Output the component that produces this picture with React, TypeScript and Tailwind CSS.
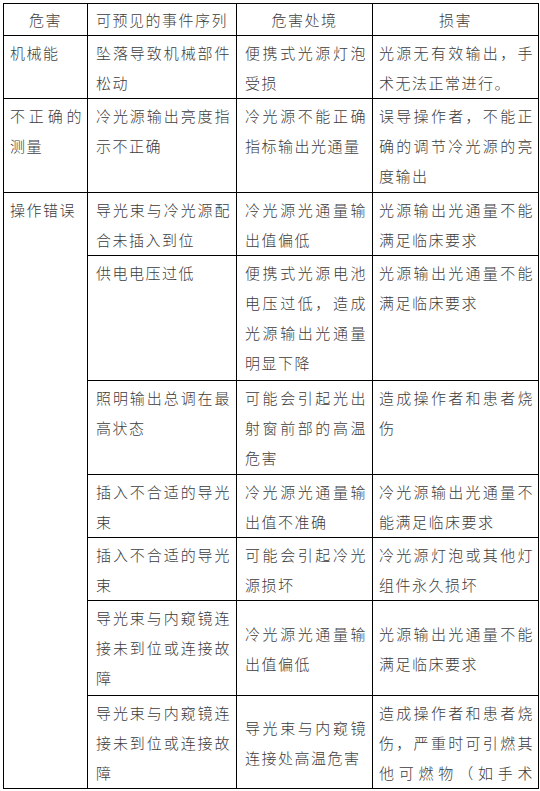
import React from "react";

type Cell = {
  text: string;
  mid?: boolean;
  rowSpan?: number;
  last?: boolean;
};

type Row = { h: number; cells: Cell[] };

const pad = ["pl-[6px] pr-[4px]", "pl-[8px] pr-[5px]", "pl-[8px] pr-[5px]", "pl-[6px] pr-[4px]"];

const rows: Row[] = [
  {
    h: 63,
    cells: [
      { text: "机械能" },
      { text: "坠落导致机械部件松动" },
      { text: "便携式光源灯泡受损" },
      { text: "光源无有效输出，手术无法正常进行。" },
    ],
  },
  {
    h: 94,
    cells: [
      { text: "不正确的测量" },
      { text: "冷光源输出亮度指示不正确" },
      { text: "冷光源不能正确指标输出光通量" },
      { text: "误导操作者，不能正确的调节冷光源的亮度输出" },
    ],
  },
  {
    h: 63,
    cells: [
      { text: "操作错误", rowSpan: 7 },
      { text: "导光束与冷光源配合未插入到位" },
      { text: "冷光源光通量输出值偏低" },
      { text: "光源输出光通量不能满足临床要求" },
    ],
  },
  {
    h: 125,
    cells: [
      { text: "供电电压过低" },
      { text: "便携式光源电池电压过低，造成光源输出光通量明显下降" },
      { text: "光源输出光通量不能满足临床要求" },
    ],
  },
  {
    h: 94,
    cells: [
      { text: "照明输出总调在最高状态" },
      { text: "可能会引起光出射窗前部的高温危害" },
      { text: "造成操作者和患者烧伤" },
    ],
  },
  {
    h: 63,
    cells: [
      { text: "插入不合适的导光束" },
      { text: "冷光源光通量输出值不准确" },
      { text: "冷光源输出光通量不能满足临床要求" },
    ],
  },
  {
    h: 63,
    cells: [
      { text: "插入不合适的导光束" },
      { text: "可能会引起冷光源损坏" },
      { text: "冷光源灯泡或其他灯组件永久损坏" },
    ],
  },
  {
    h: 95,
    cells: [
      { text: "导光束与内窥镜连接未到位或连接故障" },
      { text: "冷光源光通量输出值偏低", mid: true },
      { text: "光源输出光通量不能满足临床要求", mid: true },
    ],
  },
  {
    h: 93,
    cells: [
      { text: "导光束与内窥镜连接未到位或连接故障" },
      { text: "导光束与内窥镜连接处高温危害", mid: true },
      // the table runs on past the page edge, so the last line is stretched like a full one
      { text: "造成操作者和患者烧伤，严重时可引燃其他可燃物（如手术", last: true },
    ],
  },
];

export default function App() {
  return (
    <div className="min-h-screen bg-white pl-[3px] pt-[3px]">
      <table
        className="w-[535px] table-fixed border-collapse border border-black text-[15px] leading-[30px] tracking-[1.5px] text-[#3c3c3c] font-light"
        style={{ fontFamily: '"Noto Sans CJK SC", "Noto Sans", sans-serif' }}
      >
        <colgroup>
          <col className="w-[84px]" />
          <col className="w-[149px]" />
          <col className="w-[136px]" />
          <col className="w-[166px]" />
        </colgroup>
        <thead>
          <tr className="h-[31px]">
            {["危害", "可预见的事件序列", "危害处境", "损害"].map((t) => (
              <th key={t} className="border border-black p-0 pt-[1px] text-center font-light align-middle">
                {t}
              </th>
            ))}
          </tr>
        </thead>
        <tbody>
          {rows.map((row, ri) => {
            const offset = 4 - row.cells.length;
            return (
              <tr key={ri} style={{ height: row.h }}>
                {row.cells.map((c, ci) => (
                  <td
                    key={ci}
                    rowSpan={c.rowSpan}
                    className={`border border-black pt-[2px] pb-0 text-justify ${pad[ci + offset]} ${
                      c.mid ? "align-middle" : "align-top"
                    } ${c.last ? "[text-align-last:justify]" : ""}`}
                  >
                    {c.text}
                  </td>
                ))}
              </tr>
            );
          })}
        </tbody>
      </table>
    </div>
  );
}
